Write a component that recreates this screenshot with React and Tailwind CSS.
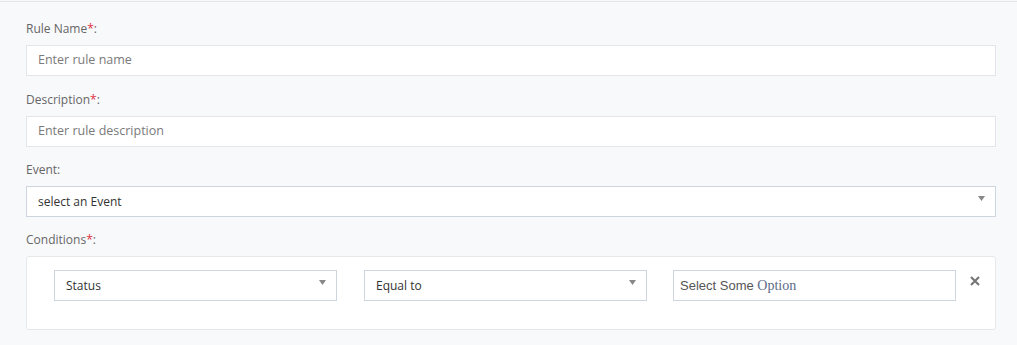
import React from "react";

const sans = { fontFamily: '"Open Sans", "Noto Sans", sans-serif' };

function Label({ text, required }) {
    return (
        <div className="text-[12px] leading-[16px] text-[#666] mb-[8px]" style={sans}>
            {text}
            {required && <span className="text-[#e0313f]">*</span>}:
        </div>
    );
}

function TextInput({ placeholder }) {
    return (
        <div className="h-[31px] bg-white border border-[#e2e5e9] flex items-center px-[11px] text-[12.5px] text-[#7a7a7a]" style={sans}>
            {placeholder}
        </div>
    );
}

function Caret() {
    return (
        <svg width="7" height="5" viewBox="0 0 7 5" className="shrink-0">
            <path d="M0 0 L7 0 L3.5 5 Z" fill="#888" />
        </svg>
    );
}

function Select({ value, className }) {
    return (
        <div
            className={"h-[31px] bg-white border border-[#cdd5de] flex items-start justify-between pl-[11px] pr-[10px] " + (className || "")}
            style={sans}
        >
            <span className="text-[12px] leading-[29px] text-[#333]">{value}</span>
            <span className="mt-[9px]"><Caret /></span>
        </div>
    );
}

export default function App() {
    return (
        <div className="w-[1017px] h-[345px] bg-[#f8f9fb] pt-px overflow-hidden">
            <div className="border-t border-[#e3e5e8] pl-[26px] pr-[21px] pt-[19px]">
                <Label text="Rule Name" required />
                <TextInput placeholder="Enter rule name" />

                <div className="mt-[16px]">
                    <Label text="Description" required />
                    <TextInput placeholder="Enter rule description" />
                </div>

                <div className="mt-[15px]">
                    <Label text="Event" />
                    <Select value="select an Event" />
                </div>

                <div className="mt-[15px]">
                    <Label text="Conditions" required />
                    <div className="h-[74px] bg-white border border-[#e6e8eb] rounded-[3px] pt-[13px] pl-[27px] flex items-start">
                        <Select value="Status" className="w-[283px]" />
                        <Select value="Equal to" className="w-[283px] ml-[27px]" />
                        <div className="w-[283px] ml-[26px] h-[31px] bg-white border border-[#cdd5de] flex items-center pl-[6px] text-[13px] text-[#555]">
                            <span style={{ fontFamily: '"Liberation Sans", Arial, sans-serif' }}>Select Some&nbsp;</span>
                            <span className="text-[14px] text-[#5b6b87]" style={{ fontFamily: '"Liberation Serif", "Times New Roman", serif' }}>Option</span>
                        </div>
                        <svg width="10" height="10" viewBox="0 0 10 10" className="ml-[14px] mt-[6px]">
                            <path d="M1 1 L9 9 M9 1 L1 9" stroke="#777" strokeWidth="2.2" />
                        </svg>
                    </div>
                </div>
            </div>
        </div>
    );
}
